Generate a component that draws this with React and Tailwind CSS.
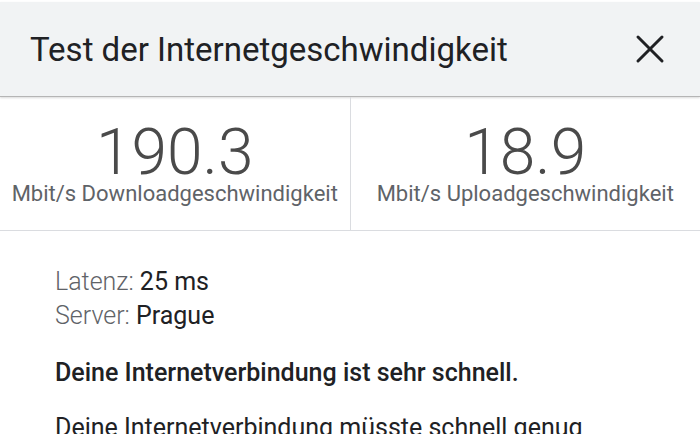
import React from "react";
import { X } from "lucide-react";

function Stat({ value, label, border }) {
  return (
    <div className={`flex-1 flex flex-col items-center pt-[28px] ${border ? "border-r border-[#dadce0]" : ""}`}>
      <div className="text-[64px] font-light leading-[55px] text-[#4a4a4a]">{value}</div>
      <div className="text-[22px] leading-[28px] text-[#5f6368]">{label}</div>
    </div>
  );
}

export default function App() {
  return (
    <div className="w-[700px] h-[434px] overflow-hidden bg-white font-['Roboto',sans-serif]">
      <div className="mt-[2px] h-[95px] bg-[#f1f3f4] flex items-center justify-between pl-[30px] pr-[26px] border-b border-[#b5b5b5] shadow-[0_1px_2px_rgba(0,0,0,0.15)]">
        <h1 className="text-[33px] leading-none text-[#202124]">Test der Internetgeschwindigkeit</h1>
        <X className="w-[48px] h-[48px] text-[#202124]" strokeWidth={1.5} />
      </div>
      <div className="flex h-[134px] border-b border-[#dadce0]">
        <Stat value="190.3" label="Mbit/s Downloadgeschwindigkeit" border />
        <Stat value="18.9" label="Mbit/s Uploadgeschwindigkeit" />
      </div>
      <div className="pl-[55px] pt-[34px] text-[25px]">
        <div className="leading-[34px]">
          <span className="font-light text-[#5f6368]">Latenz: </span>
          <span className="text-[#202124]">25 ms</span>
        </div>
        <div className="leading-[34px]">
          <span className="font-light text-[#5f6368]">Server: </span>
          <span className="text-[#202124]">Prague</span>
        </div>
        <p className="mt-[25px] font-medium leading-[30px] text-[#202124]">Deine Internetverbindung ist sehr schnell.</p>
        <p className="mt-[25px] leading-[30px] text-[#202124]">Deine Internetverbindung müsste schnell genug</p>
      </div>
    </div>
  );
}
